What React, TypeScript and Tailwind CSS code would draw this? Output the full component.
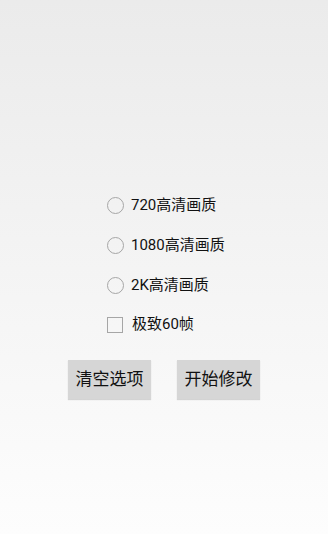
const options = ['720高清画质', '1080高清画质', '2K高清画质'];

const Radio = () => (
  <div className="w-[17px] h-[17px] rounded-full border-[1.5px] border-[#a6a6a6] shrink-0" />
);

const Check = () => (
  <div className="w-[16px] h-[16px] border-[1.5px] border-[#a6a6a6] shrink-0" />
);

export default function App() {
  return (
    <div
      className="min-h-[534px] w-full flex flex-col bg-gradient-to-b from-[#ebebeb] to-[#fdfdfd] text-[#111111]"
      style={{ fontFamily: 'Roboto, "Noto Sans CJK SC", sans-serif' }}
    >
      <div className="flex flex-col pl-[107px] pt-[185px]">
        {options.map((o) => (
          <div key={o} className="flex items-center gap-[7px] h-[40px]">
            <Radio />
            <span className="text-[15px] leading-none">{o}</span>
          </div>
        ))}
        <div className="flex items-center gap-[9px] h-[39px]">
          <Check />
          <span className="text-[15px] leading-none">极致60帧</span>
        </div>
      </div>

      <div className="flex justify-center gap-[26px] mt-[16px]">
        <button className="w-[83px] h-[39px] bg-[#d6d6d6] shadow-[0_1px_1px_rgba(0,0,0,0.15)] text-[17px] text-[#111111] flex items-center justify-center">
          清空选项
        </button>
        <button className="w-[83px] h-[39px] bg-[#d6d6d6] shadow-[0_1px_1px_rgba(0,0,0,0.15)] text-[17px] text-[#111111] flex items-center justify-center">
          开始修改
        </button>
      </div>
    </div>
  );
}
